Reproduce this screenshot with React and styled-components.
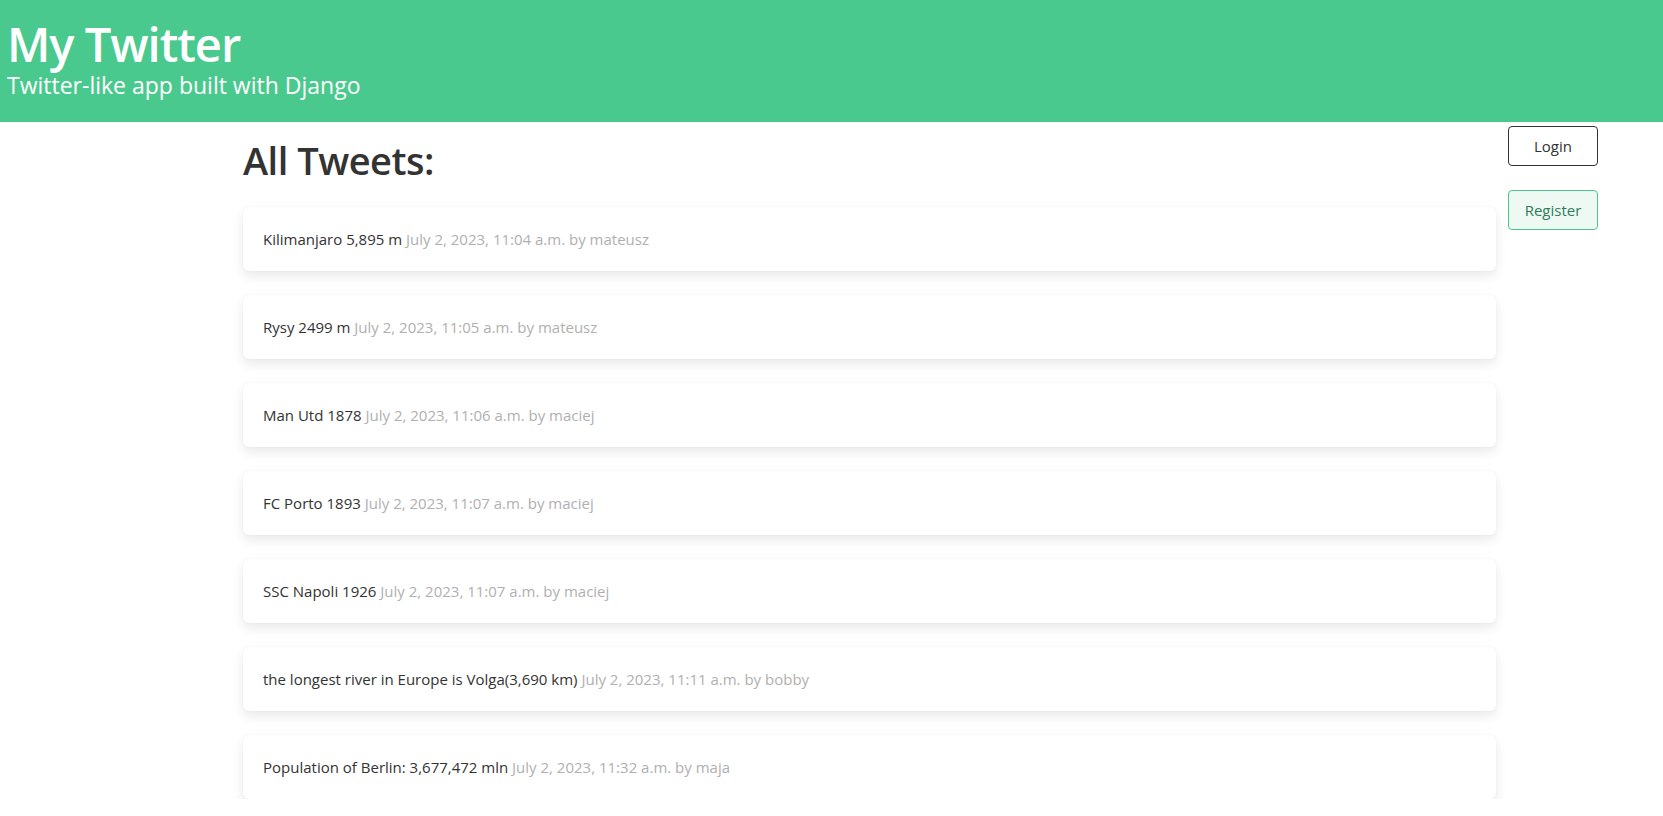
import React from 'react';
import styled, { createGlobalStyle } from 'styled-components';

const GlobalStyle = createGlobalStyle`
  body {
    margin: 0;
    font-family: "Open Sans", "Noto Sans", sans-serif;
    color: #333;
    background: #fff;
  }
`;

const Header = styled.header`
  background: #4ac98e;
  color: #fff;
  padding: 16px 7px 25px;
`;

const SiteTitle = styled.h1`
  margin: 0;
  font-size: 47px;
  line-height: 1.2;
  font-weight: 600;
  letter-spacing: -1px;
`;

const Subtitle = styled.p`
  margin: 2px 0 0;
  font-size: 23px;
  line-height: 1;
`;

const Layout = styled.div`
  display: grid;
  grid-template-columns: 231px 1253px 1fr;
  column-gap: 12px;
`;

const Main = styled.main`
  grid-column: 2;
`;

const Heading = styled.h2`
  margin: 15px 0 22px;
  font-size: 38px;
  line-height: 1.25;
  font-weight: 600;
  letter-spacing: -0.5px;
  color: #333;
`;

const TweetList = styled.ul`
  list-style: none;
  margin: 0;
  padding: 0;
  display: flex;
  flex-direction: column;
  gap: 24px;
`;

const TweetCard = styled.li`
  background: #fff;
  border-radius: 6px;
  padding: 20px;
  font-size: 15px;
  line-height: 24px;
  box-shadow: 0 5px 12px rgba(0, 0, 0, 0.09), 0 0 2px rgba(0, 0, 0, 0.05);
`;

const Meta = styled.span`
  color: #b0b0b0;
`;

const Side = styled.aside`
  grid-column: 3;
  display: flex;
  flex-direction: column;
  align-items: flex-start;
  gap: 24px;
  padding-top: 4px;
`;

const Button = styled.button`
  width: 90px;
  height: 40px;
  border-radius: 4px;
  font-family: inherit;
  font-size: 15px;
  cursor: pointer;
  border: 1px solid ${p => (p.$variant === 'success' ? '#4ac98e' : '#333')};
  background: ${p => (p.$variant === 'success' ? '#eef9f3' : '#fff')};
  color: ${p => (p.$variant === 'success' ? '#2e7c5a' : '#333')};
`;

const tweets = [
  ['Kilimanjaro 5,895 m', 'July 2, 2023, 11:04 a.m. by mateusz'],
  ['Rysy 2499 m', 'July 2, 2023, 11:05 a.m. by mateusz'],
  ['Man Utd 1878', 'July 2, 2023, 11:06 a.m. by maciej'],
  ['FC Porto 1893', 'July 2, 2023, 11:07 a.m. by maciej'],
  ['SSC Napoli 1926', 'July 2, 2023, 11:07 a.m. by maciej'],
  ['the longest river in Europe is Volga(3,690 km)', 'July 2, 2023, 11:11 a.m. by bobby'],
  ['Population of Berlin: 3,677,472 mln', 'July 2, 2023, 11:32 a.m. by maja'],
];

const App = () => (
  <>
    <GlobalStyle />
    <Header>
      <SiteTitle>My Twitter</SiteTitle>
      <Subtitle>Twitter-like app built with Django</Subtitle>
    </Header>
    <Layout>
      <Main>
        <Heading>All Tweets:</Heading>
        <TweetList>
          {tweets.map(([body, meta]) => (
            <TweetCard key={meta + body}>
              {body} <Meta>{meta}</Meta>
            </TweetCard>
          ))}
        </TweetList>
      </Main>
      <Side>
        <Button>Login</Button>
        <Button $variant="success">Register</Button>
      </Side>
    </Layout>
  </>
);

export default App;
